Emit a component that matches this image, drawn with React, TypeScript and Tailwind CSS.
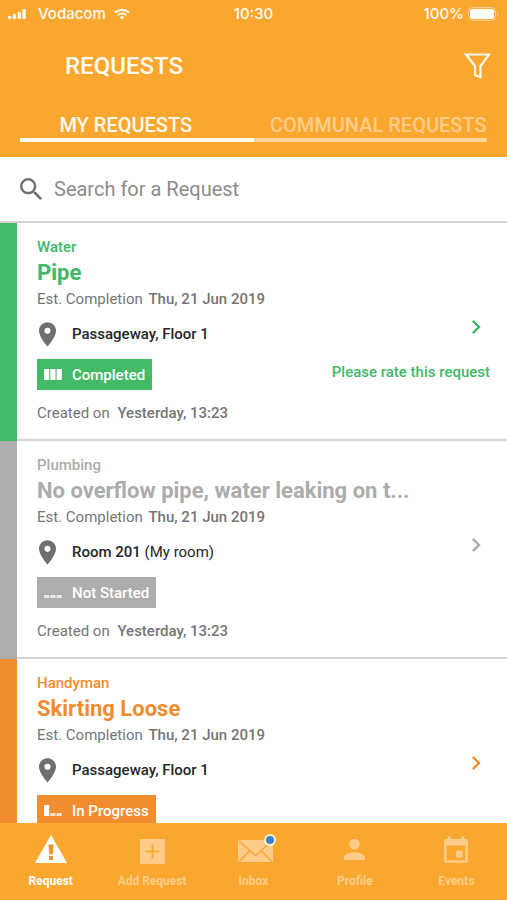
import { useState, type ReactNode } from 'react'
import clsx from 'clsx'

type Status = 'completed' | 'notStarted' | 'inProgress'

interface RequestItem {
  id: number
  category: string
  title: string
  due: string
  place: string
  placeNote?: string
  status: Status
  created: string
}

const REQUESTS: RequestItem[] = [
  {
    id: 1,
    category: 'Water',
    title: 'Pipe',
    due: 'Thu, 21 Jun 2019',
    place: 'Passageway, Floor 1',
    status: 'completed',
    created: 'Yesterday, 13:23',
  },
  {
    id: 2,
    category: 'Plumbing',
    title: 'No overflow pipe, water leaking on t...',
    due: 'Thu, 21 Jun 2019',
    place: 'Room 201',
    placeNote: '(My room)',
    status: 'notStarted',
    created: 'Yesterday, 13:23',
  },
  {
    id: 3,
    category: 'Handyman',
    title: 'Skirting Loose',
    due: 'Thu, 21 Jun 2019',
    place: 'Passageway, Floor 1',
    status: 'inProgress',
    created: 'Yesterday, 13:23',
  },
]

const STATUS: Record<Status, { label: string; text: string; bg: string; done: number }> = {
  completed: { label: 'Completed', text: 'text-[#40b866]', bg: 'bg-[#43bb66]', done: 3 },
  notStarted: { label: 'Not Started', text: 'text-[#acacac]', bg: 'bg-[#adadad]', done: 0 },
  inProgress: { label: 'In Progress', text: 'text-[#f08c2e]', bg: 'bg-[#f18d2f]', done: 1 },
}

function StatusBar() {
  return (
    <div className="flex h-7 items-center px-2 font-['Inter',sans-serif] text-[15px] font-medium">
      <div className="flex flex-1 items-center">
        <svg viewBox="0 0 18 10" className="mr-3 h-[10px] w-[18px]" fill="currentColor">
          <rect x="0" y="7" width="3.4" height="3" rx="0.8" />
          <rect x="4.8" y="5" width="3.4" height="5" rx="0.8" />
          <rect x="9.6" y="3" width="3.4" height="7" rx="0.8" />
          <rect x="14.4" y="0" width="3.4" height="10" rx="0.8" />
        </svg>
        Vodacom
        <svg viewBox="0 0 16 12" className="ml-2 h-3 w-4" fill="none" stroke="currentColor" strokeWidth="2">
          <path d="M1 4.4C5 .7 11 .7 15 4.4" />
          <path d="M3.6 7.2c2.5-2.3 6.3-2.3 8.8 0" />
          <path d="M8 11.6 5.7 9.2c1.3-1.2 3.3-1.2 4.6 0z" fill="currentColor" stroke="none" />
        </svg>
      </div>
      <span>10:30</span>
      <div className="flex flex-1 items-center justify-end">
        100%
        <svg viewBox="0 0 31 14" className="ml-1 h-[14px] w-[31px]">
          <rect x="0.5" y="0.5" width="27" height="13" rx="4" fill="none" stroke="#fff" strokeOpacity="0.45" />
          <rect x="2" y="2" width="24" height="10" rx="2.5" fill="#fff" />
          <path d="M29 5v4c1.4-.6 1.4-3.4 0-4z" fill="#fff" fillOpacity="0.5" />
        </svg>
      </div>
    </div>
  )
}

function Progress({ done }: { done: number }) {
  return (
    <svg viewBox="0 0 18 11" className="h-[11px] w-[18px]" fill="currentColor">
      {[0, 1, 2].map((i) => (
        <rect
          key={i}
          x={i * 6.3}
          y={i < done ? 0 : 8}
          width="5.2"
          height={i < done ? 11 : 3}
          opacity={i < done ? 1 : 0.75}
        />
      ))}
    </svg>
  )
}

function RequestCard({ item }: { item: RequestItem }) {
  const s = STATUS[item.status]
  return (
    <li className="flex shrink-0">
      <div className={clsx('w-[17px] shrink-0', s.bg)} />
      <div className="flex min-w-0 flex-1 justify-between border-b-2 border-[#d4d4d4] pt-[14px] pr-[17px] pb-4 pl-5">
        <div className="min-w-0 text-[15px] leading-5 text-[#757575]">
          <p className={clsx('font-medium', s.text)}>{item.category}</p>
          <h2 className={clsx('text-[22px] leading-8 font-bold whitespace-nowrap', s.text)}>{item.title}</h2>
          <p>
            Est. Completion <span className="ml-[2px] font-medium">{item.due}</span>
          </p>
          <p className="mt-[11px] flex h-7 items-center text-[#262626]">
            <span className="w-[35px] pl-[2px]">
              <svg viewBox="5 2 14 20" className="h-[25px] w-[17px] text-[#6f6f6f]" fill="currentColor">
                <path d="M12 2C8.13 2 5 5.13 5 9c0 5.25 7 13 7 13s7-7.75 7-13c0-3.87-3.13-7-7-7zm0 9.5a2.5 2.5 0 0 1 0-5 2.5 2.5 0 0 1 0 5z" />
              </svg>
            </span>
            <span>
              <span className="font-medium">{item.place}</span> {item.placeNote}
            </span>
          </p>
          <p
            className={clsx(
              'mt-[11px] flex h-[31px] w-fit items-center gap-[10px] px-[7px] font-medium text-white',
              s.bg,
            )}
          >
            <Progress done={s.done} />
            {s.label}
          </p>
          <p className="mt-[13px]">
            Created on <span className="ml-1 font-medium">{item.created}</span>
          </p>
        </div>
        <div className={clsx('flex shrink-0 flex-col items-end gap-[21px] pt-[76px]', s.text)}>
          <button type="button" aria-label={`Open ${item.title}`}>
            <svg viewBox="0 0 24 24" className="size-7" fill="currentColor">
              <path d="M10 6 8.59 7.41 13.17 12l-4.58 4.59L10 18l6-6z" />
            </svg>
          </button>
          {item.status === 'completed' && (
            <a href="#rate" className="text-[15px] leading-5 font-medium">
              Please rate this request
            </a>
          )}
        </div>
      </div>
    </li>
  )
}

function NavItem({ label, active, children }: { label: string; active?: boolean; children: ReactNode }) {
  return (
    <a
      href={`#${label}`}
      aria-current={active ? 'page' : undefined}
      className={clsx('flex flex-col items-center gap-[10px]', active ? 'text-white' : 'text-[#fdcc88]')}
    >
      <span className="relative flex h-7 items-center">{children}</span>
      <span className="text-xs leading-4 font-bold">{label}</span>
    </a>
  )
}

function BottomNav() {
  return (
    <nav className="grid h-[77px] shrink-0 grid-cols-5 bg-[#faa730] pt-3">
      <NavItem label="Request" active>
        <svg viewBox="0 0 32 28" className="h-7 w-8" fill="currentColor">
          <path d="M16 0 32 28H0z" />
          <path d="M13.500 9.500h5l-.7 10h-3.600zM14 21h4v4h-4z" fill="#f0952c" />
        </svg>
      </NavItem>
      <NavItem label="Add Request">
        <svg viewBox="0 0 25 25" className="mt-[4px] size-[25px]" fill="currentColor">
          <path d="M0 0h25v25H0z" />
          <path d="M12.500 5.500v14M5.500 12.500h14" stroke="#f9a93a" strokeWidth="2" />
        </svg>
      </NavItem>
      <NavItem label="Inbox">
        <svg viewBox="0 0 35 22" className="mt-1 ml-[5px] h-[22px] w-[35px]" fill="currentColor">
          <path d="M0 0h35v22H0z" />
          <path d="M1 1 17.500 15.500 34 1M1 21.500 12 10.500M34 21.500 23 10.500" fill="none" stroke="#f9a93a" strokeWidth="1.500" />
        </svg>
        <span className="absolute -top-px -right-[3px] size-3 rounded-full border-2 border-[#fff0d6] bg-[#3b82c8]" />
      </NavItem>
      <NavItem label="Profile">
        <svg viewBox="4 4 16 16" className="size-[21px]" fill="currentColor">
          <path d="M12 12c2.210 0 4-1.790 4-4s-1.790-4-4-4-4 1.790-4 4 1.790 4 4 4zm0 2c-2.670 0-8 1.340-8 4v2h16v-2c0-2.660-5.330-4-8-4z" />
        </svg>
      </NavItem>
      <NavItem label="Events">
        <svg viewBox="3 1 18 20" className="h-[27px] w-6" fill="currentColor">
          <path d="M17 12h-5v5h5v-5zM16 1v2H8V1H6v2H5c-1.110 0-1.990.9-1.990 2L3 19c0 1.100.89 2 2 2h14c1.100 0 2-.9 2-2V5c0-1.100-.9-2-2-2h-1V1h-2zm3 18H5V8h14v11z" />
        </svg>
      </NavItem>
    </nav>
  )
}

export default function App() {
  const [tab, setTab] = useState<'mine' | 'communal'>('mine')
  const [query, setQuery] = useState('')

  return (
    <div className="flex h-screen flex-col overflow-hidden bg-white font-['Roboto',sans-serif]">
      <header className="shrink-0 bg-[#faa730] pb-[15px] text-[#fffaf0]">
        <StatusBar />
        <div className="flex h-[75px] items-center justify-between pr-4 pl-[65px]">
          <h1 className="text-2xl font-medium">REQUESTS</h1>
          <button type="button" aria-label="Filter">
            <svg viewBox="0 0 27 26" className="h-[26px] w-[27px]" fill="none" stroke="currentColor" strokeWidth="2.200">
              <path d="M2 1.500h23L16.500 13v11.200L11 22V13z" />
            </svg>
          </button>
        </div>
        <div className="mt-[10px] grid grid-cols-2 px-5" role="tablist">
          <button
            type="button"
            role="tab"
            aria-selected={tab === 'mine'}
            onClick={() => setTab('mine')}
            className={clsx(
              'border-b-4 pr-[22px] pb-px text-xl leading-6 font-medium',
              tab === 'mine' ? 'border-[#fffaf0]' : 'border-[#fdd59b] text-[#fdcc88]',
            )}
          >
            MY REQUESTS
          </button>
          <button
            type="button"
            role="tab"
            aria-selected={tab === 'communal'}
            onClick={() => setTab('communal')}
            className={clsx(
              'border-b-4 pb-px pl-4 text-xl leading-6 font-medium whitespace-nowrap',
              tab === 'communal' ? 'border-[#fffaf0]' : 'border-[#fdd59b] text-[#fdcc88]',
            )}
          >
            COMMUNAL REQUESTS
          </button>
        </div>
      </header>

      <label className="flex h-[66px] shrink-0 items-center gap-3 border-b-2 border-[#d4d4d4] px-5">
        <svg viewBox="3 3 17.490 17.490" className="size-[22px] shrink-0" fill="#707070">
          <path d="M15.500 14h-.790l-.280-.270A6.471 6.471 0 0 0 16 9.500 6.500 6.500 0 1 0 9.500 16c1.610 0 3.090-.590 4.230-1.570l.270.280v.790l5 4.990L20.490 19l-4.990-5zm-6 0C7.010 14 5 11.990 5 9.500S7.010 5 9.500 5 14 7.010 14 9.500 11.990 14 9.500 14z" />
        </svg>
        <input
          type="search"
          aria-label="Search for a Request"
          placeholder="Search for a Request"
          value={query}
          onChange={(e) => setQuery(e.target.value)}
          className="min-w-0 flex-1 text-xl leading-6 text-[#444] outline-none placeholder:text-[#8c8c8c]"
        />
      </label>

      <ul className="flex min-h-0 flex-1 flex-col overflow-y-auto [scrollbar-width:none]">
        {REQUESTS.filter((r) => r.title.toLowerCase().includes(query.toLowerCase())).map((r) => (
          <RequestCard key={r.id} item={r} />
        ))}
      </ul>

      <BottomNav />
    </div>
  )
}
